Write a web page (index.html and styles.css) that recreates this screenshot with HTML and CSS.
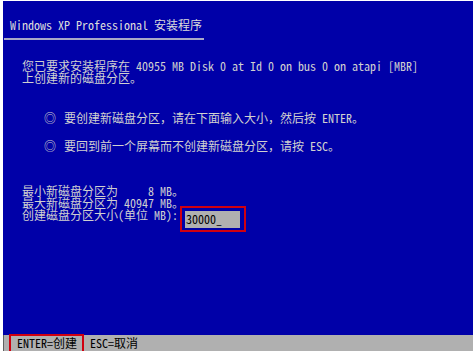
FILE: index.html
```html
<!DOCTYPE html>
<html lang="zh-CN">
<head>
    <meta charset="utf-8">
    <title>Windows XP Professional 安装程序</title>
    <link rel="stylesheet" href="styles.css">
</head>
<body>
    <div id="screen">
        <div id="header">
            <div id="title">Windows XP Professional 安装程序</div>
            <div id="title-rule"></div>
        </div>
        <div id="content">
            <p class="intro">您已要求安装程序在 40955 MB Disk 0 at Id 0 on bus 0 on atapi [MBR]<br>上创建新的磁盘分区。</p>
            <ul class="options">
                <li><span class="bullet">◎</span>要创建新磁盘分区，请在下面输入大小，然后按 ENTER。</li>
                <li><span class="bullet">◎</span>要回到前一个屏幕而不创建新磁盘分区，请按 ESC。</li>
            </ul>
            <div class="sizes">
                <div>最小新磁盘分区为&nbsp;&nbsp;&nbsp;&nbsp; 8 MB。</div>
                <div>最大新磁盘分区为 40947 MB。</div>
                <div class="size-row">
                    <span>创建磁盘分区大小(单位 MB):</span>
                    <span class="input-mark"><span class="input">30000_</span></span>
                </div>
            </div>
        </div>
        <div id="statusbar">
            <span class="key-mark">ENTER=创建</span>
            <span class="key">ESC=取消</span>
        </div>
    </div>
</body>
</html>
```

FILE: styles.css
```css
html, body {
    margin: 0;
    padding: 0;
    height: 100%;
    background-color: #ffffff;
}

body {
    font-family: "Noto Sans Mono CJK SC", "Liberation Mono", "Noto Sans CJK SC", monospace;
    font-size: 12px;
    line-height: 12px;
    color: #d0d0d0;
    overflow: hidden;
}

#screen {
    margin: 1px 0 0 3px;
    height: 350px;
    background-color: #0000a8;
    display: flex;
    flex-direction: column;
}

#header {
    padding: 18px 0 0 7px;
}

#title {
    color: #dcdcdc;
}

#title-rule {
    width: 200px;
    height: 2px;
    margin: 7px 0 0 -6px;
    background-color: #a8a8c8;
}

#content {
    flex: 1;
    padding: 0 0 0 19px;
}

.intro {
    margin: 20px 0 0 0;
}

.options {
    list-style: none;
    margin: 28px 0 0 0;
    padding: 0 0 0 22px;
}

.options li {
    margin-bottom: 16px;
}

.bullet {
    display: inline-block;
    width: 20px;
}

.sizes {
    margin-top: 33px;
}

.size-row {
    display: flex;
    align-items: flex-start;
}

.input-mark {
    margin: -3px 0 0 2px;
    padding: 3px 4px 2px 3px;
    border: 2px solid #d00010;
}

.input {
    display: inline-block;
    width: 54px;
    background-color: #b0b0b0;
    color: #000000;
    padding: 2px 0 3px 1px;
}

#statusbar {
    height: 16px;
    background-color: #b0b0b0;
    color: #000000;
    display: flex;
    align-items: center;
    border-left: 1px solid #606060;
}

.key-mark {
    margin-left: 5px;
    padding: 1px 5px 1px 6px;
    border: 2px solid #d00010;
    border-bottom: none;
    height: 14px;
}

.key {
    margin-left: 6px;
}
```
